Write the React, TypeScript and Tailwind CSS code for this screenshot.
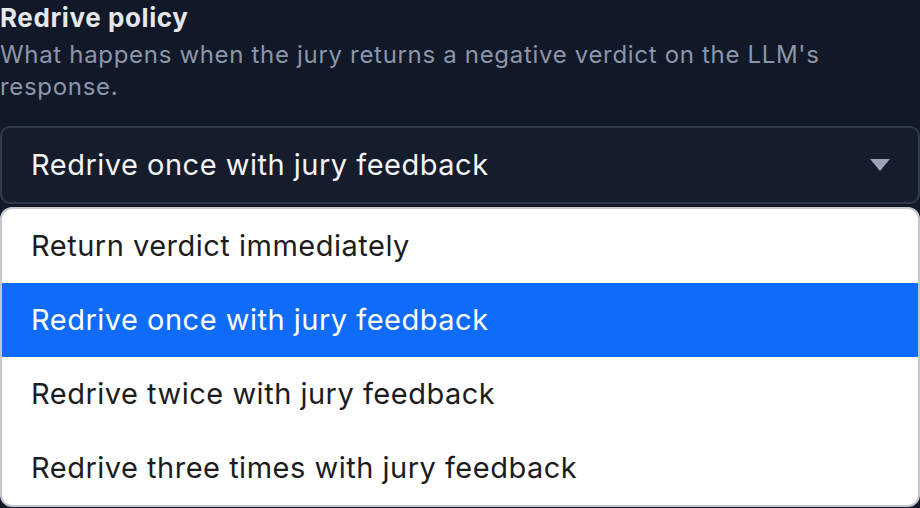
const options = [
  "Return verdict immediately",
  "Redrive once with jury feedback",
  "Redrive twice with jury feedback",
  "Redrive three times with jury feedback",
];

export default function App() {
  const selected = 1;

  return (
    <div className="h-[508px] w-[920px] overflow-hidden bg-[#111827] font-['Inter','Noto_Sans',sans-serif]">
      <h2 className="pt-[2px] text-[26px] leading-[32px] font-bold tracking-[0.6px] text-[#e5e7eb]">Redrive policy</h2>
      <p className="mt-[5px] text-[24px] leading-[32px] tracking-[0.68px] text-[#8b96aa]">
        What happens when the jury returns a negative verdict on the LLM's response.
      </p>

      <div className="mt-[23px] flex h-[78px] items-center justify-between rounded-[10px] border-2 border-[#2f3a4b] bg-[#151c2c] pr-[28px] pl-[29px]">
        <span className="text-[29px] tracking-[0.5px] text-[#f3f4f6]">{options[selected]}</span>
        <svg width="20" height="12" viewBox="0 0 20 12">
          <path d="M0 0h20L10 12z" fill="#9aa3b5" />
        </svg>
      </div>

      <div className="mt-[3px] overflow-hidden rounded-[12px] border-2 border-[#c4c7ce] bg-white">
        {options.map((opt, i) => (
          <div
            key={opt}
            className={`flex h-[74px] items-center pl-[29px] text-[29px] tracking-[0.5px] ${
              i === selected ? "bg-[#0f6cfb] text-white" : "text-[#1c1c1e]"
            }`}
          >
            {opt}
          </div>
        ))}
      </div>
    </div>
  );
}
